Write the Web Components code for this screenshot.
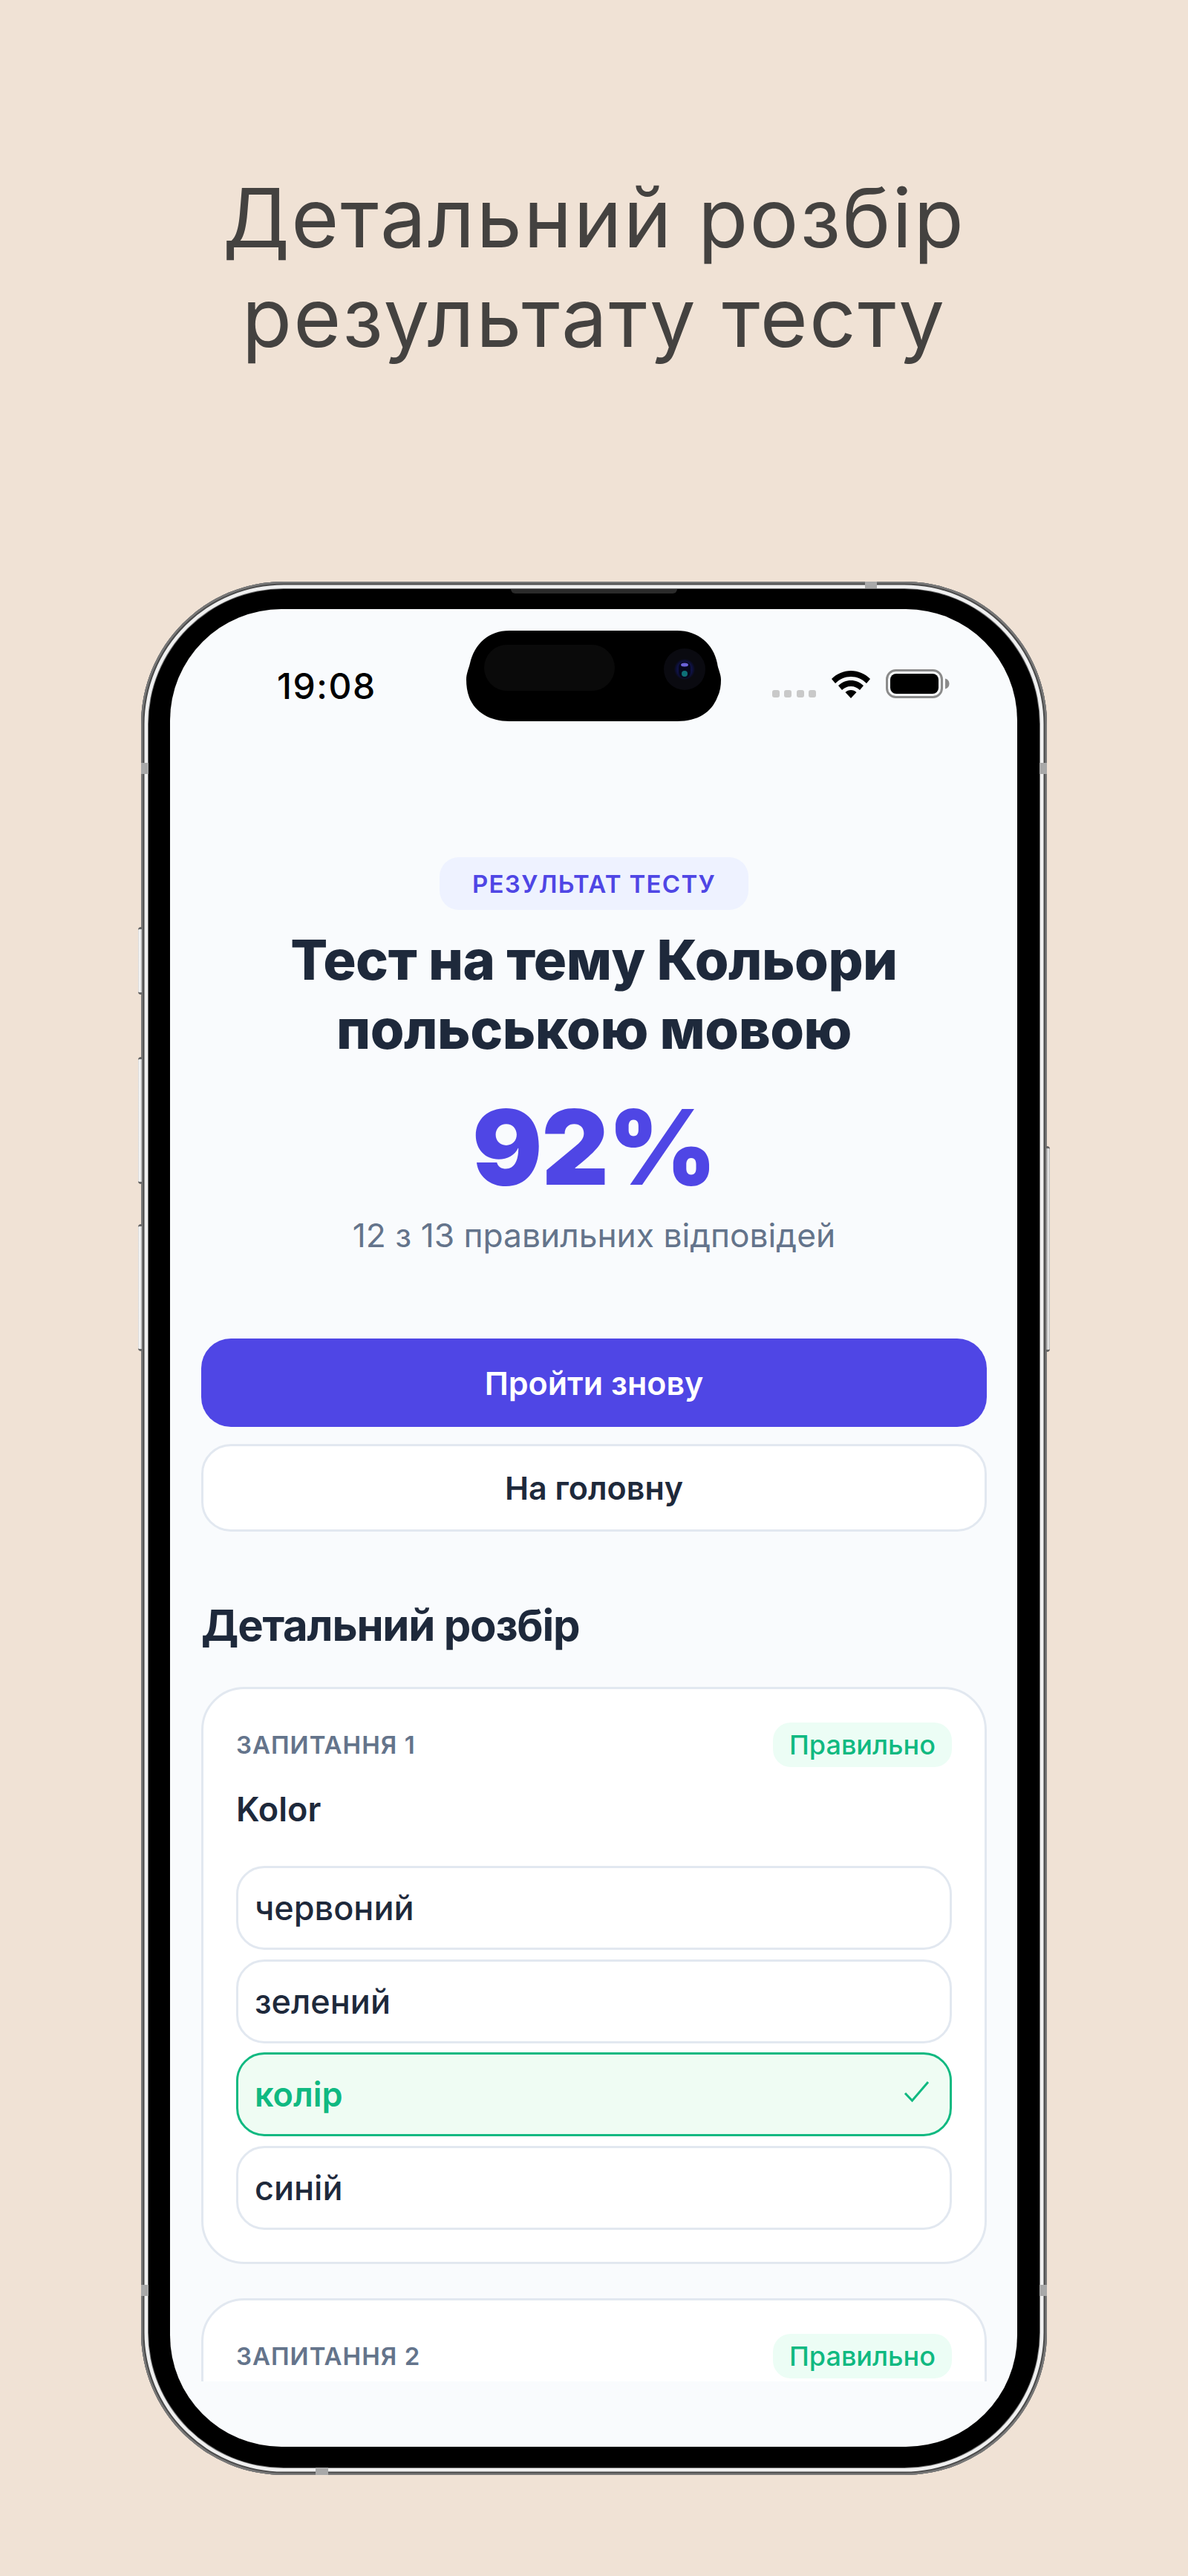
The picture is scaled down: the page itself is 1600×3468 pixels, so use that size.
<!DOCTYPE html>
<html lang="uk">
<head>
<meta charset="utf-8">
<title>Детальний розбір результату тесту</title>
<style>
  html, body { margin: 0; padding: 0; background: #f0e2d5; }
</style>
</head>
<body>
<store-shot>
  <span slot="headline">Детальний розбір<br>результату тесту</span>
  <phone-frame>
    <status-bar slot="status" time="19:08"></status-bar>
    <score-summary label="РЕЗУЛЬТАТ ТЕСТУ" score="92%" detail="12 з 13 правильних відповідей">Тест на тему Кольори<br>польською мовою</score-summary>
    <action-button variant="primary">Пройти знову</action-button>
    <action-button>На головну</action-button>
    <section-title>Детальний розбір</section-title>
    <question-card number="ЗАПИТАННЯ 1" status="Правильно" word="Kolor">
      <answer-option>червоний</answer-option>
      <answer-option>зелений</answer-option>
      <answer-option correct>колір</answer-option>
      <answer-option>синій</answer-option>
    </question-card>
    <!-- second card runs past the bottom of the scroll area, only its header shows -->
    <question-card number="ЗАПИТАННЯ 2" status="Правильно" style="height: 400px"></question-card>
  </phone-frame>
</store-shot>

<script>
  const FONT = '"Inter", "Liberation Sans", sans-serif';

  class ShadowBase extends HTMLElement {
    constructor() {
      super();
      this.attachShadow({ mode: "open" });
    }
    connectedCallback() {
      this.shadowRoot.innerHTML = this.template();
    }
  }

  // whole picture: beige page, headline, phone
  class StoreShot extends ShadowBase {
    template() {
      return `
        <style>
          :host { display: flex; flex-direction: column; align-items: center; width: 1600px; height: 3468px;
                  background: #f0e2d5; font-family: ${FONT}; overflow: hidden; }
          h1 { margin: 226px 0 289px; font-size: 110px; line-height: 134px; font-weight: 400;
               color: #444240; text-align: center; letter-spacing: 2.200px; white-space: nowrap; }
        </style>
        <h1><slot name="headline"></slot></h1>
        <slot></slot>`;
    }
  }

  class PhoneFrame extends ShadowBase {
    template() {
      return `
        <style>
          :host { display: block; position: relative; width: 1220px; height: 2549px; box-sizing: border-box;
                  padding: 37px 40px 38px 39px; background: #000; border-radius: 192px;
                  box-shadow: inset 0 0 0 2.500px #777, inset 0 0 0 4.500px #4a4a4a, inset 0 0 0 9px #f0f0f0,
                              inset 0 0 0 10px #777; }
          .screen { display: flex; flex-direction: column; height: 100%; background: #f9fbfd;
                    border-radius: 150px; overflow: hidden; position: relative; }
          .scroll { flex: 1; min-height: 0; margin-bottom: 88px; overflow: hidden; box-sizing: border-box;
                    padding: 198px 41px 0 42px; }
          .speaker { position: absolute; left: 498px; top: 10px; width: 224px; height: 6px;
                     background: #2b2b2b; border-radius: 0 0 8px 8px; }
          .band { position: absolute; background: #a9a9a9; }
          .side { position: absolute; width: 5px; background: linear-gradient(90deg, #d9d9d9, #fbfbfb 50%, #b5b5b5);
                  border-top: 3px solid #666; border-bottom: 3px solid #666; box-sizing: border-box; }
          .side.l { left: -4px; border-radius: 4px 0 0 4px; }
          .side.r { right: -4px; border-radius: 0 4px 4px 0; background: linear-gradient(90deg, #8f8f8f, #f2f2f2 60%, #aaa); }
        </style>
        <i class="side l" style="top:465px;height:91px"></i>
        <i class="side l" style="top:640px;height:171px"></i>
        <i class="side l" style="top:865px;height:171px"></i>
        <i class="side r" style="top:760px;height:277px"></i>
        <i class="band" style="left:975px;top:0;width:16px;height:9px"></i>
        <i class="band" style="left:235px;bottom:0;width:17px;height:10px"></i>
        <i class="band" style="left:0;top:244px;width:10px;height:15px"></i>
        <i class="band" style="right:0;top:244px;width:10px;height:15px"></i>
        <i class="band" style="left:0;top:2293px;width:10px;height:15px"></i>
        <i class="band" style="right:0;top:2293px;width:10px;height:15px"></i>
        <i class="speaker"></i>
        <div class="screen">
          <slot name="status"></slot>
          <div class="scroll"><slot></slot></div>
        </div>
        <dynamic-island></dynamic-island>`;
    }
  }

  class DynamicIsland extends ShadowBase {
    template() {
      return `
        <style>
          :host { position: absolute; left: 438px; top: 66px; width: 343px; height: 122px; display: block; }
          svg { display: block; }
        </style>
        <svg width="343" height="122" viewBox="0 0 343 122">
          <defs>
            <radialGradient id="lens" cx="50%" cy="50%" r="50%">
              <stop offset="0" stop-color="#16195c"/>
              <stop offset="0.75" stop-color="#0e1140"/>
              <stop offset="1" stop-color="#0a0a14"/>
            </radialGradient>
          </defs>
          <path d="M58 0H284C312 0 333 18 338 44C339 52 343 58 343 66C343 74 342 82 338 90C330 110 312 122 284 122H58C32 122 12 110 4 90C1 82 0 74 0 66C0 58 3 52 5 44C11 18 30 0 58 0Z" fill="#000"/>
          <rect x="24" y="19" width="176" height="62" rx="31" fill="#0a0a0a"/>
          <circle cx="294" cy="52" r="28" fill="#0a0a10"/>
          <circle cx="294" cy="52" r="14" fill="url(#lens)"/>
          <rect x="286" y="42" width="16" height="22" rx="8" fill="#06071c"/>
          <ellipse cx="294" cy="46" rx="5" ry="2.500" fill="#6a62d8"/>
          <circle cx="294" cy="58" r="4" fill="#0d6f78"/>
        </svg>`;
    }
  }

  class StatusBar extends ShadowBase {
    template() {
      return `
        <style>
          :host { display: flex; height: 136px; box-sizing: border-box; position: relative; padding: 0 91px 0 144px;
                  flex: none; align-items: flex-start; justify-content: space-between; color: #000; }
          .time { margin-top: 75px; font-size: 48px; line-height: 58px; font-weight: 500; letter-spacing: 1.600px; }
          .icons { display: flex; align-items: flex-end; margin-top: 81px; }
          .dots { display: flex; gap: 6.300px; margin-right: 21px; margin-bottom: 1px; }
          .dots i { width: 10px; height: 10px; border-radius: 3px; background: #c9c9c9; }
          .wifi { margin-right: 21px; display: block; }
          .batt { display: block; }
        </style>
        <span class="time">${this.getAttribute("time")}</span>
        <div class="icons">
          <div class="dots"><i></i><i></i><i></i><i></i></div>
          <svg class="wifi" width="52" height="37" viewBox="0 0 52 37">
            <path d="M26 0C16 0 7 4 0 11L5 17C11 11 18 8 26 8S41 11 47 17L52 11C45 4 36 0 26 0Z" fill="#000"/>
            <path d="M26 13C19.500 13 14 15.500 9 20L14 26C17 23 21 21 26 21S35 23 38 26L43 20C38 15.500 32.500 13 26 13Z" fill="#000"/>
            <path d="M26 26C23 26 20.500 27 18.500 29L26 37L33.500 29C31.500 27 29 26 26 26Z" fill="#000"/>
          </svg>
          <svg class="batt" width="86" height="39" viewBox="0 0 86 39">
            <rect x="1.500" y="1.500" width="74" height="36" rx="12" fill="none" stroke="#8b8b8b" stroke-width="3"/>
            <rect x="6" y="6" width="65" height="27" rx="8" fill="#000"/>
            <path d="M80 12.500C83.500 13.500 85.500 16 85.500 19.500S83.500 25.500 80 26.500Z" fill="#8b8b8b"/>
          </svg>
        </div>`;
    }
  }

  class ScoreSummary extends ShadowBase {
    template() {
      return `
        <style>
          :host { display: flex; flex-direction: column; align-items: center; text-align: center; }
          .label { height: 71px; width: 416px; box-sizing: border-box; display: flex; align-items: center; justify-content: center;
                   background: #eef2ff; border-radius: 26px; color: #4f46e5; font-size: 33px; font-weight: 600; letter-spacing: 1.300px; }
          h2 { margin: 21px 0 0; font-size: 74px; line-height: 93px; font-weight: 800; color: #1e293b; letter-spacing: -0.500px; }
          .score { margin-top: 42px; font-size: 140px; line-height: 140px; font-weight: 900; color: #4f46e5; letter-spacing: -1px; }
          .detail { margin-top: 19px; margin-bottom: 109px; font-size: 44.300px; line-height: 60px; font-weight: 400; color: #64748b; }
        </style>
        <div class="label">${this.getAttribute("label")}</div>
        <h2><slot></slot></h2>
        <div class="score">${this.getAttribute("score")}</div>
        <div class="detail">${this.getAttribute("detail")}</div>`;
    }
  }

  class ActionButton extends ShadowBase {
    template() {
      const primary = this.getAttribute("variant") === "primary";
      return `
        <style>
          :host { display: flex; align-items: center; justify-content: center; box-sizing: border-box;
                  height: ${primary ? 119 : 118}px; border-radius: 40px; font-size: 43px; font-weight: 600;
                  margin-bottom: ${primary ? 23 : 0}px;
                  background: ${primary ? "#4f46e5" : "#fff"}; color: ${primary ? "#fff" : "#1e293b"};
                  border: ${primary ? "none" : "3px solid #e2e8f0"}; }
        </style>
        <slot></slot>`;
    }
  }

  class SectionTitle extends ShadowBase {
    template() {
      return `
        <style>
          :host { display: block; margin: 91px 0 48px; font-size: 58px; line-height: 70px; font-weight: 700;
                  color: #1e293b; letter-spacing: -1.200px; }
        </style>
        <slot></slot>`;
    }
  }

  class QuestionCard extends ShadowBase {
    template() {
      const word = this.getAttribute("word");
      return `
        <style>
          :host { display: block; box-sizing: border-box; background: #fff; border: 3px solid #e2e8f0; border-radius: 58px;
                  padding: 45px 44px 43px; margin-bottom: 46px; }
          .head { display: flex; justify-content: space-between; align-items: center; height: 60px; }
          .num { font-size: 33px; font-weight: 600; color: #64748b; letter-spacing: 1px; }
          .pill { height: 60px; width: 241px; display: flex; align-items: center; justify-content: center; background: #ecfdf5;
                  border-radius: 24px; color: #10b981; font-size: 36px; font-weight: 500; }
          .word { margin: 29px 0 48px; font-size: 45px; line-height: 56px; font-weight: 600; color: #1e293b; }
          .list { display: flex; flex-direction: column; gap: 12.500px; }
        </style>
        <div class="head"><span class="num">${this.getAttribute("number")}</span><span class="pill">${this.getAttribute("status")}</span></div>
        ${word ? `<div class="word">${word}</div>` : ""}
        <div class="list"><slot></slot></div>`;
    }
  }

  class AnswerOption extends ShadowBase {
    template() {
      const ok = this.hasAttribute("correct");
      return `
        <style>
          :host { display: flex; align-items: center; justify-content: space-between; box-sizing: border-box; height: 113px;
                  padding: 0 27px 0 22px; border-radius: 38px; font-size: 45px;
                  border: 3px solid ${ok ? "#10b981" : "#e2e8f0"}; background: ${ok ? "#effcf3" : "#fff"};
                  color: ${ok ? "#10b981" : "#1e293b"}; font-weight: ${ok ? 600 : 450}; }
          svg { display: block; margin-top: -8px; }
        </style>
        <slot></slot>
        ${ok ? `<svg width="35" height="29" viewBox="0 0 35 29" fill="none"><path d="M2 17L11.500 27L33 2" stroke="#10b981" stroke-width="3"/></svg>` : ""}`;
    }
  }

  customElements.define("store-shot", StoreShot);
  customElements.define("phone-frame", PhoneFrame);
  customElements.define("dynamic-island", DynamicIsland);
  customElements.define("status-bar", StatusBar);
  customElements.define("score-summary", ScoreSummary);
  customElements.define("action-button", ActionButton);
  customElements.define("section-title", SectionTitle);
  customElements.define("question-card", QuestionCard);
  customElements.define("answer-option", AnswerOption);
</script>
</body>
</html>
